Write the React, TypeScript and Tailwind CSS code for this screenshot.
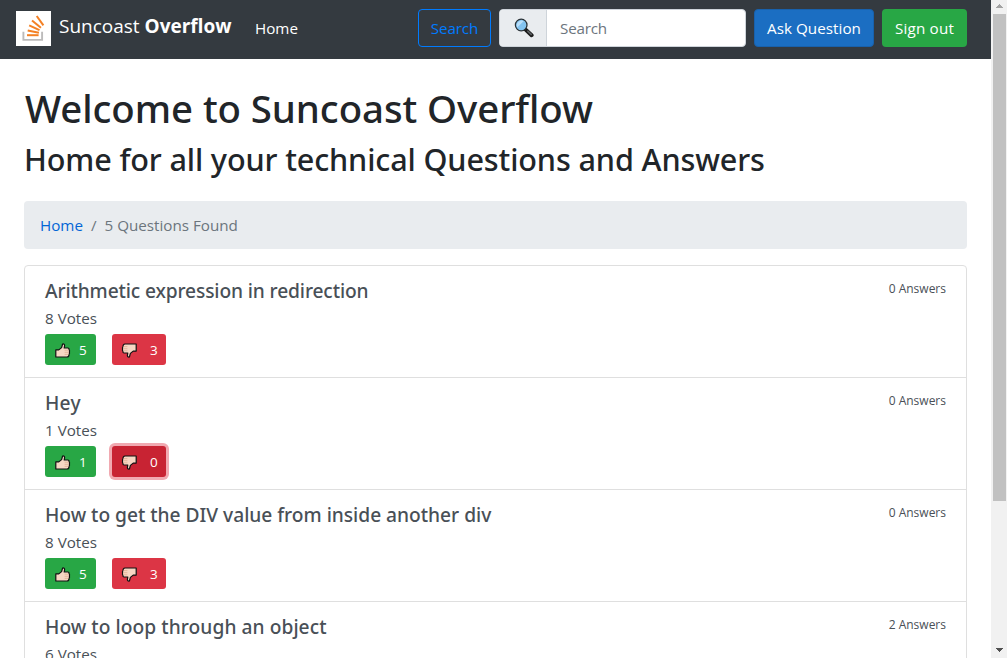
type Question = {
  title: string;
  titleClass: string;
  votes: number;
  answers: number;
  up: number;
  down: number;
  focused?: boolean;
};

const questions: Question[] = [
  { title: 'Arithmetic expression in redirection', titleClass: 'tracking-[-0.13px]', votes: 8, answers: 0, up: 5, down: 3 },
  { title: 'Hey', titleClass: 'tracking-[0.2px]', votes: 1, answers: 0, up: 1, down: 0, focused: true },
  { title: 'How to get the DIV value from inside another div', titleClass: 'tracking-[-0.02px]', votes: 8, answers: 0, up: 5, down: 3 },
  { title: 'How to loop through an object', titleClass: 'tracking-[0.05px]', votes: 6, answers: 2, up: 4, down: 2 },
];

function Logo() {
  return (
    <svg width="35" height="35" viewBox="0 0 35 35" className="block shrink-0">
      <rect width="35" height="35" fill="#fff" />
      <path d="M7.4 20.8v8.1h18.7V20.8" fill="none" stroke="#bcbbbb" strokeWidth="1.9" />
      <g stroke="#f48024" strokeWidth="2" fill="none">
        <path d="M11 24.2h11.6" />
        <path d="M11.7 19.4l11.2 2.4" />
        <path d="M13.2 14.3l10.3 4.9" />
        <path d="M16 9.4l8.9 7.3" />
        <path d="M20.7 5l6.7 9.3" />
      </g>
    </svg>
  );
}

function Magnifier() {
  return (
    <svg width="20" height="20" viewBox="0 0 20 20" className="block">
      <path d="M11.6 11.6l6 5.6" stroke="#1b1b1b" strokeWidth="4" strokeLinecap="round" />
      <path d="M13.8 13.2l3.4 3.2" stroke="#5c6063" strokeWidth="1.6" strokeLinecap="round" />
      <circle cx="7.2" cy="7" r="5.8" fill="#83c4f1" stroke="#2b3338" strokeWidth="1.3" />
      <path d="M3.2 9.6L9.8 3a5 5 0 0 0-6.6 6.6z" fill="#b8defa" />
    </svg>
  );
}

function Thumb({ down = false }: { down?: boolean }) {
  return (
    <svg width="16" height="15" viewBox="0 0 16 15" className={down ? 'block rotate-180' : 'block'}>
      <path
        d="M.8 6.9H3.8L6.6 4.6 7.6 1Q9.6.6 9.6 2.6L9.2 5H12.8Q14.3 5.2 14 6.7 15 7.8 14.4 9 14.9 10.4 14 11.4 14.1 13.8 12 14H.8Z"
        fill="#f7d7c4"
        stroke="#111"
        strokeWidth="1.2"
        strokeLinejoin="round"
      />
      <path d="M9.6 7.2h4M9.6 9.3h4.2M9.6 11.4h3.8" stroke="#dfae93" strokeWidth=".8" />
    </svg>
  );
}

function QuestionRow({ q }: { q: Question }) {
  return (
    <li className="flex h-[112px] items-start justify-between border-b border-[#dfdfdf] px-5 pt-3 text-[#495057]">
      <div>
        <h5 className={`mb-1 h-6 font-["Noto_Sans",sans-serif] text-[19.2px] font-medium leading-[25px] ${q.titleClass}`}>{q.title}</h5>
        <p className="mb-1 h-6 text-[15.2px] leading-[25px]">{q.votes} Votes</p>
        <div className="flex gap-4">
          <button className="flex h-[31px] w-[51px] items-center rounded-[3px] bg-[#28a745] pl-[10px] text-[13.5px] text-white">
            <span className="mt-[2px]"><Thumb /></span>
            <span className="ml-[8px] mt-px">{q.up}</span>
          </button>
          <button
            className={`flex h-[31px] w-[54px] items-center rounded-[3px] pl-[9px] text-[13.5px] text-white ${
              q.focused ? 'bg-[#c82333] shadow-[0_0_0_3px_#f1a9b1]' : 'bg-[#dc3545]'
            }`}
          >
            <span className="mt-[2px]"><Thumb down /></span>
            <span className="ml-[13px] mt-px">{q.down}</span>
          </button>
        </div>
      </div>
      <small className="mt-px text-[12px] leading-[20px]">{q.answers} Answers</small>
    </li>
  );
}

function Scrollbar() {
  return (
    <div className="flex h-full w-4 shrink-0 flex-col items-center justify-between bg-[#f1f1f1] pl-px">
      <svg width="13" height="14" viewBox="0 0 13 14" className="block" shapeRendering="crispEdges">
        <path d="M3 8L6.5 4 10 8z" fill="#a3a3a3" />
      </svg>
      <div className="mb-auto h-[487px] w-[13px] bg-[#c1c1c1]" />
      <svg width="13" height="14" viewBox="0 0 13 14" className="block" shapeRendering="crispEdges">
        <path d="M3 4L10 4 6.5 8z" fill="#505050" />
      </svg>
    </div>
  );
}

export default function App() {
  return (
    <div className='flex h-[658px] w-[1007px] overflow-hidden bg-white font-["Open_Sans",sans-serif] text-[#212529]'>
      <div className="h-full w-[991px] overflow-hidden">
        <nav className="flex h-[59px] items-center bg-[#343a40] pl-4 pr-6 pb-[3px] text-[15.2px] text-white">
          <Logo />
          <span className="ml-2 w-[172px] whitespace-pre pb-[5px] text-[19px] leading-[30px]">
            Suncoast <b className="font-bold">Overflow</b>
          </span>
          <a className="ml-6">Home</a>
          <div className="ml-auto flex h-[38px] gap-2">
            <button className="w-[73px] rounded border border-[#007bff] pt-px tracking-[-0.1px] text-[#007bff]">Search</button>
            <div className="flex w-[247px] overflow-hidden rounded border border-[#ced4da] bg-white">
              <span className="flex w-[47px] items-center justify-center border-r border-[#ced4da] bg-[#e9ecef] pl-px">
                <Magnifier />
              </span>
              <span className="flex items-center pl-[13px] pt-px tracking-[-0.2px] text-[#6c757d]">Search</span>
            </div>
            <button className="w-[120px] rounded border border-[#1861ac] bg-[#1b6ec2] pt-px tracking-[0.05px]">Ask Question</button>
            <button className="w-[85px] rounded bg-[#28a745] pt-px tracking-[0.2px]">Sign out</button>
          </div>
        </nav>
        <main className="px-6 pt-6">
          <h1 className='mb-2 h-12 whitespace-nowrap pl-px font-["Noto_Sans",sans-serif] text-[38.4px] font-medium leading-[50px] tracking-[-0.07px]'>
            Welcome to Suncoast Overflow
          </h1>
          <h2 className='h-[38px] whitespace-nowrap font-["Noto_Sans",sans-serif] text-[30.6px] font-medium leading-[41px] tracking-[-0.13px]'>
            Home for all your technical Questions and Answers
          </h2>
          <ol className="mt-6 flex h-12 items-center rounded bg-[#e9ecef] px-4 pt-px text-[15.2px] text-[#6c757d]">
            <li className="text-[#0366d6]">Home</li>
            <li className="px-2">/</li>
            <li>5 Questions Found</li>
          </ol>
          <ul className="mt-4 rounded-t border border-[#dfdfdf]">
            {questions.map((q) => (
              <QuestionRow key={q.title} q={q} />
            ))}
          </ul>
        </main>
      </div>
      <Scrollbar />
    </div>
  );
}
